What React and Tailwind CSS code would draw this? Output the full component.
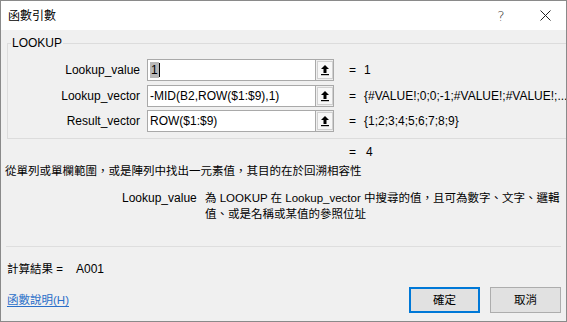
import React from "react";

const font = { fontFamily: '"Liberation Sans", "Noto Sans CJK TC", sans-serif' };

function RefIcon() {
  return (
    <svg width="10" height="12" viewBox="0 0 10 12">
      <path d="M5 1 L9 5 H6.5 V9 H3.5 V5 H1 Z" fill="#000" />
      <rect x="1" y="10" width="8" height="1.2" fill="#000" />
    </svg>
  );
}

function ArgRow({ label, value, result, selected }) {
  return (
    <div className="flex items-center h-[22px]">
      <div className="w-[132px] text-right text-[12px] leading-[16px] text-black">{label}</div>
      <div className="ml-[7px] flex h-[22px] w-[187px]">
        <div className="flex-1 h-full bg-white border border-[#a9a9a9] flex items-center pl-[2px] text-[12px] leading-[16px] text-black overflow-hidden whitespace-nowrap">
          {selected ? (
            <>
              <span className="bg-[#b8b8b8] px-[1px]">{value}</span>
              <span className="inline-block w-px h-[14px] bg-black"></span>
            </>
          ) : (
            <span>{value}</span>
          )}
        </div>
        <div className="w-[18px] h-full border border-l-0 border-[#a9a9a9] bg-[#efefef] flex items-center justify-center">
          <div className="w-[16px] h-[18px] border border-[#d0d0d0] bg-[#f7f7f7] flex items-center justify-center">
            <RefIcon />
          </div>
        </div>
      </div>
      <div className="ml-[15px] text-[12px] leading-[16px] text-black">=</div>
      <div className="ml-[8px] text-[12px] leading-[16px] text-black whitespace-nowrap">{result}</div>
    </div>
  );
}

export default function App() {
  return (
    <div
      className="w-[567px] h-[322px] box-border border border-[#8a8a8a] bg-[#f0f0f0] flex flex-col overflow-hidden text-black"
      style={font}
    >
      {/* Title bar */}
      <div className="h-[29px] bg-white flex items-center shrink-0">
        <div className="pl-[7px] text-[12px] leading-[16px] text-black">函數引數</div>
        <div className="flex-1"></div>
        <div className="w-[30px] flex justify-center text-[14px] leading-[16px] text-[#333]" style={{ fontFamily: '"DejaVu Sans", sans-serif', fontWeight: 300 }}>?</div>
        <div className="w-[14px]"></div>
        <div className="w-[30px] flex justify-center mr-[6px]">
          <svg width="11" height="11" viewBox="0 0 11 11">
            <path d="M0.5 0.5 L10.5 10.5 M10.5 0.5 L0.5 10.5" stroke="#222" strokeWidth="1" />
          </svg>
        </div>
      </div>

      {/* Group box */}
      <fieldset className="ml-[6px] mr-[7px] mt-[5px] border border-[#dcdcdc] pt-[8px] pb-[6px] px-0 shrink-0">
        <legend className="ml-[3px] px-[1px] text-[12px] leading-[16px] text-black">LOOKUP</legend>
        <div className="flex flex-col gap-[3.5px]">
          <ArgRow label="Lookup_value" value="1" result="1" selected />
          <ArgRow label="Lookup_vector" value="-MID(B2,ROW($1:$9),1)" result="{#VALUE!;0;0;-1;#VALUE!;#VALUE!;..." />
          <ArgRow label="Result_vector" value="ROW($1:$9)" result="{1;2;3;4;5;6;7;8;9}" />
        </div>
      </fieldset>

      {/* = 4 */}
      <div className="mt-[5px] h-[16px] flex items-center pl-[348px] text-[12px] leading-[16px] shrink-0">
        <span>=</span>
        <span className="ml-[10px]">4</span>
      </div>

      {/* description */}
      <div className="mt-[3px] h-[16px] pl-[4px] text-[11.5px] leading-[16px] whitespace-nowrap shrink-0">
        從單列或單欄範圍，或是陣列中找出一元素值，其目的在於回溯相容性
      </div>

      <div className="mt-[11px] flex pl-[121px] shrink-0">
        <div className="w-[83px] text-[12px] leading-[16px]">Lookup_value</div>
        <div className="text-[11.5px] leading-[16px] whitespace-nowrap">
          <div>為 LOOKUP 在 Lookup_vector 中搜尋的值，且可為數字、文字、邏輯</div>
          <div>值、或是名稱或某值的參照位址</div>
        </div>
      </div>

      {/* separator */}
      <div className="mt-[24px] mx-[5px] h-px bg-[#dedede] shrink-0"></div>

      {/* result */}
      <div className="mt-[14px] h-[16px] flex items-center pl-[6px] shrink-0">
        <div className="w-[69px] text-[11.5px] leading-[16px]">計算結果 =</div>
        <div className="text-[12px] leading-[16px]">A001</div>
      </div>

      {/* bottom row */}
      <div className="mt-[10px] h-[26px] flex items-center pl-[6px] pr-[5px] shrink-0">
        <a className="text-[11.5px] leading-[16px] text-[#2a6fc9] underline underline-offset-2" href="#">函數說明(H)</a>
        <div className="flex-1"></div>
        <button className="w-[71px] h-[26px] bg-[#e1e1e1] border border-[#0078d7] shadow-[inset_0_0_0_1px_#0078d7] text-[11.5px] leading-[16px] text-black">確定</button>
        <button className="ml-[10px] w-[71px] h-[26px] bg-[#e1e1e1] border border-[#adadad] text-[11.5px] leading-[16px] text-black">取消</button>
      </div>
    </div>
  );
}
